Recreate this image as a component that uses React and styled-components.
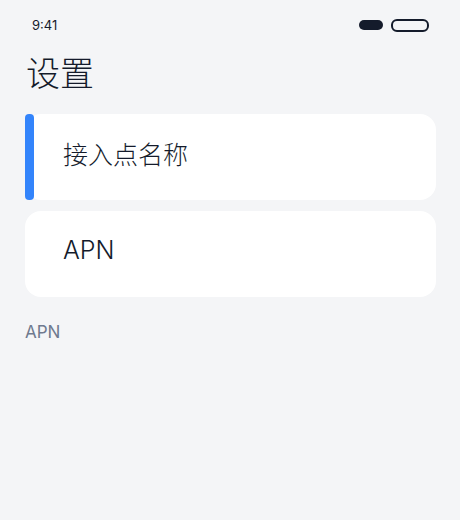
import styled, { createGlobalStyle } from "styled-components";

const GlobalStyle = createGlobalStyle`
  * { box-sizing: border-box; }
  body {
    margin: 0;
    background: #f4f5f7;
    font-family: Inter, "Noto Sans CJK SC", sans-serif;
    color: #141b2b;
  }
`;

const App = () => {
  return (
    <Page>
      <GlobalStyle />
      <StatusBar>
        <Time>9:41</Time>
        <Indicators>
          <Pill filled />
          <Pill />
        </Indicators>
      </StatusBar>
      <Title>设置</Title>
      <List>
        <Card active>
          <CardLabel>接入点名称</CardLabel>
        </Card>
        <Card>
          <CardLabel>APN</CardLabel>
        </Card>
      </List>
      <Footnote>APN</Footnote>
    </Page>
  );
};

const Page = styled.div`
  width: 460px;
  height: 520px;
  padding: 0 24px 0 25px;
`;

const StatusBar = styled.div`
  height: 50px;
  display: flex;
  align-items: center;
  justify-content: space-between;
  padding: 0 7px 0 7px;
`;

const Time = styled.span`
  font-size: 13px;
  color: #141b2b;
`;

const Indicators = styled.div`
  display: flex;
  align-items: center;
  gap: 8px;
`;

const Pill = styled.span`
  display: block;
  width: ${(p) => (p.filled ? "24px" : "38px")};
  height: ${(p) => (p.filled ? "10px" : "13px")};
  border-radius: 6px;
  background: ${(p) => (p.filled ? "#141b2b" : "transparent")};
  border: ${(p) => (p.filled ? "none" : "2px solid #141b2b")};
`;

const Title = styled.h1`
  margin: 0 0 0 1px;
  font-size: 34px;
  font-weight: 300;
  line-height: 48px;
  height: 64px;
`;

const List = styled.div`
  display: flex;
  flex-direction: column;
  gap: 11px;
`;

const Card = styled.div`
  position: relative;
  height: 86px;
  background: #ffffff;
  border-radius: 16px;
  display: flex;
  align-items: center;
  padding: 0 0 9px 38px;

  &::before {
    content: "";
    display: ${(p) => (p.active ? "block" : "none")};
    position: absolute;
    left: 0;
    top: 0;
    bottom: 0;
    width: 9px;
    border-radius: 4px;
    background: #3384fb;
  }
`;

const CardLabel = styled.span`
  font-size: 25px;
  font-weight: 300;
  color: #141b2b;
`;

const Footnote = styled.div`
  margin-top: 25px;
  font-size: 17px;
  font-weight: 400;
  color: #6f7a8f;
`;

export default App;
